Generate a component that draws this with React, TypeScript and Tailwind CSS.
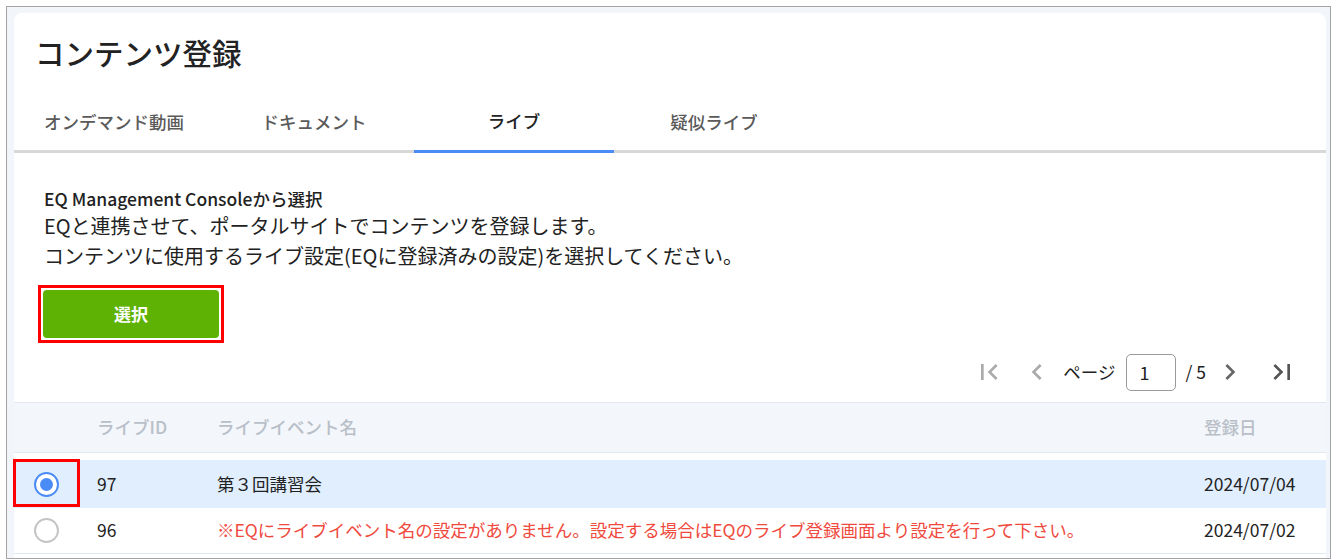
import React from "react";
import { MdFirstPage, MdLastPage, MdChevronLeft, MdChevronRight } from "react-icons/md";

const font = { fontFamily: '"Noto Sans CJK JP", "Noto Sans", sans-serif' };

function Radio({ checked }: { checked: boolean }) {
  return checked ? (
    <div className="w-[25px] h-[25px] rounded-full border-[2.5px] border-[#4a8bf5] flex items-center justify-center bg-white">
      <div className="w-[13px] h-[13px] rounded-full bg-[#4a8bf5]" />
    </div>
  ) : (
    <div className="w-[25px] h-[25px] rounded-full border-[2.5px] border-[#c4c4c4] bg-white" />
  );
}

export default function App() {
  const tabs = ["オンデマンド動画", "ドキュメント", "ライブ", "疑似ライブ"];
  return (
    <div className="w-[1335px] h-[560px] bg-white" style={font}>
      <div className="ml-[6px] mt-[6px] w-[1325px] h-[553px] border border-[#a3a3a3] bg-[#f2f5fa] pl-[7px] pt-[6px] pr-[4px] overflow-hidden">
        <div className="bg-white rounded-t-[8px] h-[600px]">
          <div className="pl-[21px] pt-[19px] h-[84px]">
            <h1 className="text-[29.5px] leading-[40px] text-[#222] font-medium">コンテンツ登録</h1>
          </div>
          <div className="flex border-b-[3px] border-[#d8d8d8] h-[56px]">
            {tabs.map((t, i) => (
              <div
                key={t}
                className={
                  i === 2
                    ? "w-[200px] flex items-center justify-center text-[17.5px] font-medium text-[#222] border-b-[3px] border-[#4a8bf5] -mb-[3px] pb-[5px]"
                    : "w-[200px] flex items-center justify-center text-[17.5px] font-medium text-[#5a5a5a] pb-[2px]"
                }
              >
                {t}
              </div>
            ))}
          </div>
          <div className="pl-[30px] pt-[34px]">
            <div className="text-[17.5px] leading-[24px] font-medium text-[#222]">EQ Management Consoleから選択</div>
            <div className="text-[20px] leading-[30px] text-[#222]">EQと連携させて、ポータルサイトでコンテンツを登録します。</div>
            <div className="text-[20px] leading-[30px] text-[#222]">コンテンツに使用するライブ設定(EQに登録済みの設定)を選択してください。</div>
            <div className="mt-[14px] -ml-[6px] inline-block border-[3px] border-[#ff0000] p-[2px]">
              <button className="w-[176px] h-[48px] rounded-[4px] bg-[#5eb204] text-white text-[17px] font-bold">選択</button>
            </div>
          </div>
          <div className="flex items-center justify-end pr-[28px] mt-[9px] h-[40px] text-[17.5px] text-[#222]">
            <MdFirstPage size={32} className="text-[#aaa]" />
            <MdChevronLeft size={32} className="text-[#aaa] ml-[16px]" />
            <span className="ml-[10px]">ページ</span>
            <div className="ml-[10px] w-[50px] h-[37px] border border-[#9a9a9a] rounded-[5px] flex items-center pl-[13px] text-[18px]">1</div>
            <span className="ml-[10px]">/ 5</span>
            <MdChevronRight size={32} className="text-[#666] ml-[8px]" />
            <MdLastPage size={32} className="text-[#555] ml-[20px]" />
          </div>
          <div className="mt-[10px] border-t border-b border-[#e2e8f0] bg-[#f3f6fb] h-[51px] flex items-center text-[17.5px] font-medium text-[#b9bfc8]">
            <div className="w-[83px]" />
            <div className="w-[120px]">ライブID</div>
            <div className="flex-1">ライブイベント名</div>
            <div className="w-[122px]">登録日</div>
          </div>
          <div className="h-[7px]" />
          <div className="relative h-[48px] bg-[#e0eefd] flex items-center text-[17.5px] text-[#222]">
            <div className="w-[64px] flex justify-center"><Radio checked /></div>
            <div className="absolute left-[-1px] top-[-1px] w-[67px] h-[48px] border-[3px] border-[#ff0000]" />
            <div className="w-[19px]" />
            <div className="w-[120px]">97</div>
            <div className="flex-1">第３回講習会</div>
            <div className="w-[122px]">2024/07/04</div>
          </div>
          <div className="h-[46px] border-b border-[#e2e8f0] flex items-center text-[17.5px] text-[#222]">
            <div className="w-[64px] flex justify-center"><Radio checked={false} /></div>
            <div className="w-[19px]" />
            <div className="w-[120px]">96</div>
            <div className="flex-1 text-[#f04a3e]">※EQにライブイベント名の設定がありません。設定する場合はEQのライブ登録画面より設定を行って下さい。</div>
            <div className="w-[122px]">2024/07/02</div>
          </div>
        </div>
      </div>
    </div>
  );
}
